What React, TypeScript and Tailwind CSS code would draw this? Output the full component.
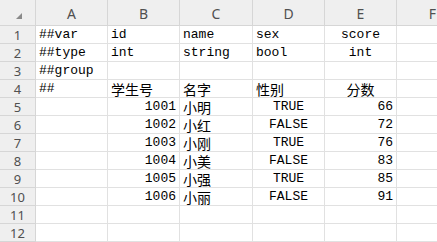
import React from 'react';

type Align = 'left' | 'center' | 'right';
type Cell = { v: string; a?: Align; cjk?: boolean };

const cols = ['A', 'B', 'C', 'D', 'E', 'F'];

const rows: Cell[][] = [
  [{ v: '##var' }, { v: 'id' }, { v: 'name' }, { v: 'sex' }, { v: 'score', a: 'center' }],
  [{ v: '##type' }, { v: 'int' }, { v: 'string' }, { v: 'bool' }, { v: 'int', a: 'center' }],
  [{ v: '##group' }],
  [{ v: '##' }, { v: '学生号', cjk: true }, { v: '名字', cjk: true }, { v: '性别', cjk: true }, { v: '分数', a: 'center', cjk: true }],
  [{ v: '' }, { v: '1001', a: 'right' }, { v: '小明', cjk: true }, { v: 'TRUE', a: 'center' }, { v: '66', a: 'right' }],
  [{ v: '' }, { v: '1002', a: 'right' }, { v: '小红', cjk: true }, { v: 'FALSE', a: 'center' }, { v: '72', a: 'right' }],
  [{ v: '' }, { v: '1003', a: 'right' }, { v: '小刚', cjk: true }, { v: 'TRUE', a: 'center' }, { v: '76', a: 'right' }],
  [{ v: '' }, { v: '1004', a: 'right' }, { v: '小美', cjk: true }, { v: 'FALSE', a: 'center' }, { v: '83', a: 'right' }],
  [{ v: '' }, { v: '1005', a: 'right' }, { v: '小强', cjk: true }, { v: 'TRUE', a: 'center' }, { v: '85', a: 'right' }],
  [{ v: '' }, { v: '1006', a: 'right' }, { v: '小丽', cjk: true }, { v: 'FALSE', a: 'center' }, { v: '91', a: 'right' }],
  [],
  [],
];

const alignClass: Record<Align, string> = {
  left: 'justify-start pl-[3px]',
  center: 'justify-center',
  right: 'justify-end pr-[3px]',
};

export default function App() {
  return (
    <div className="w-[437px] h-[242px] overflow-hidden bg-white">
      <div className="grid w-[469px] grid-cols-[36px_72px_72px_73px_72px_72px_72px] grid-rows-[26px_repeat(12,18px)]">
        {/* header row */}
        <div className="relative bg-[#efefef] border-r border-b border-[#d6d6d6]">
          <svg className="absolute left-[16px] top-[13px]" width="6" height="6" viewBox="0 0 6 6">
            <polygon points="6,0 6,6 0,6" fill="#8a8a8a" />
          </svg>
        </div>
        {cols.map((c) => (
          <div
            key={c}
            className="flex items-end justify-center pb-[2px] bg-[#efefef] border-r border-b border-[#d6d6d6] text-[14px] text-[#505050] font-['Noto_Sans',sans-serif] leading-[18px]"
          >
            {c}
          </div>
        ))}
        {rows.map((r, i) => (
          <React.Fragment key={i}>
            <div className="flex items-center justify-center bg-[#efefef] border-r border-b border-[#d6d6d6] text-[13px] text-[#505050] font-['Noto_Sans',sans-serif] leading-[18px]">
              {i + 1}
            </div>
            {cols.map((_, j) => {
              const cell = r[j];
              return (
                <div
                  key={j}
                  className={`flex items-center overflow-hidden whitespace-nowrap border-r border-b border-[#e1e1e1] text-black ${
                    cell?.cjk
                      ? "text-[14px] leading-[14px] font-['Noto_Sans_CJK_SC',sans-serif]"
                      : "text-[13px] leading-[18px] font-['Liberation_Mono','Noto_Sans_CJK_SC',monospace]"
                  } ${alignClass[cell?.a ?? 'left']}`}
                >
                  {cell?.v ?? ''}
                </div>
              );
            })}
          </React.Fragment>
        ))}
      </div>
    </div>
  );
}
